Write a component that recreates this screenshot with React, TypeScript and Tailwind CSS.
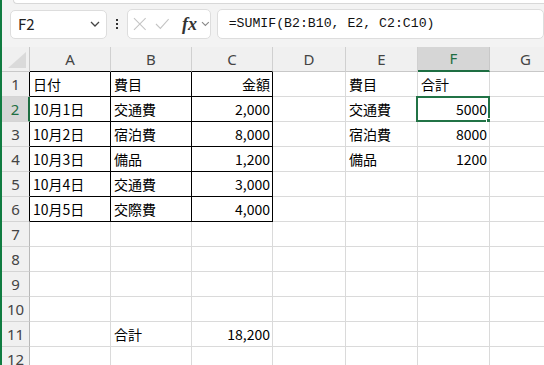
const COLS = ["A", "B", "C", "D", "E", "F", "G"];

type Cell = { text: string; right?: boolean };
const DATA: Record<number, Record<string, Cell>> = {
  1: { A: { text: "日付" }, B: { text: "費目" }, C: { text: "金額", right: true }, E: { text: "費目" }, F: { text: "合計" } },
  2: { A: { text: "10月1日" }, B: { text: "交通費" }, C: { text: "2,000", right: true }, E: { text: "交通費" }, F: { text: "5000", right: true } },
  3: { A: { text: "10月2日" }, B: { text: "宿泊費" }, C: { text: "8,000", right: true }, E: { text: "宿泊費" }, F: { text: "8000", right: true } },
  4: { A: { text: "10月3日" }, B: { text: "備品" }, C: { text: "1,200", right: true }, E: { text: "備品" }, F: { text: "1200", right: true } },
  5: { A: { text: "10月4日" }, B: { text: "交通費" }, C: { text: "3,000", right: true } },
  6: { A: { text: "10月5日" }, B: { text: "交際費" }, C: { text: "4,000", right: true } },
  11: { B: { text: "合計" }, C: { text: "18,200", right: true } },
};

const ROWS = [1, 2, 3, 4, 5, 6, 7, 8, 9, 10, 11, 12];
const inTable = (r: number, c: string) => r <= 6 && (c === "A" || c === "B" || c === "C");

function Toolbar() {
  return (
    <div className="h-[47px] bg-[#f3f3f3]">
      <div className="ml-[11px] h-[4px] rounded-bl-[6px] border-b border-l border-[#d8d8d8] bg-white" />
      <div className="mt-[5px] flex items-center">
        <div className="ml-[8px] flex h-[29px] w-[100px] items-center justify-between rounded-[5px] border border-[#dddddd] bg-white pr-[6px] pl-[7px]">
          <span className="text-[15px] text-[#222]">F2</span>
          <svg width="10" height="6" viewBox="0 0 10 6" fill="none" stroke="#444" strokeWidth="1.3">
            <path d="M1 1l4 4 4-4" />
          </svg>
        </div>
        <div className="mx-[9px] flex flex-col gap-[2px]">
          <span className="block h-[2px] w-[2px] bg-[#333]" />
          <span className="block h-[2px] w-[2px] bg-[#333]" />
          <span className="block h-[2px] w-[2px] bg-[#333]" />
        </div>
        <div className="flex h-[30px] w-[84px] items-center rounded-[5px] border border-[#dddddd] bg-white pl-[5px]">
          <svg width="14" height="14" viewBox="0 0 14 14" fill="none" stroke="#c4c4c4" strokeWidth="1.1">
            <path d="M1 1l12 12M13 1L1 13" />
          </svg>
          <svg className="ml-[9px]" width="15" height="12" viewBox="0 0 15 12" fill="none" stroke="#c4c4c4" strokeWidth="1.1">
            <path d="M1 6l4.5 4.5L14 1" />
          </svg>
          <span className="ml-[12px] font-['Liberation_Serif'] text-[18px] leading-none font-semibold text-[#333] italic">fx</span>
          <svg className="ml-[4px]" width="9" height="6" viewBox="0 0 9 6" fill="none" stroke="#888" strokeWidth="1.1">
            <path d="M1 1l3.5 3.5L8 1" />
          </svg>
        </div>
        <div className="ml-[6px] flex h-[30px] w-[340px] items-center rounded-[5px] border border-[#dddddd] bg-white pl-[11px]">
          <span className="font-['Liberation_Mono'] text-[13.2px] text-[#111]">=SUMIF(B2:B10, E2, C2:C10)</span>
        </div>
      </div>
    </div>
  );
}

function HeaderRow() {
  return (
    <>
      <div className="relative h-[25px] border-r border-b border-[#c8c8c8] bg-[#f0f0f0]">
        <svg className="absolute right-[3px] bottom-[3px]" width="18" height="16" viewBox="0 0 18 16">
          <path d="M18 0V16H0Z" fill="#dadada" />
        </svg>
      </div>
      {COLS.map((c) => {
        const sel = c === "F";
        const tbl = c === "A" || c === "B" || c === "C";
        return (
          <div
            key={c}
            className={
              "flex h-[25px] items-center justify-center font-['Noto_Sans'] text-[15px] " +
              (sel
                ? "border-r border-b-2 border-r-[#c8c8c8] border-b-[#1e6e42] bg-[#d6d6d6] text-[#1e6e42]"
                : tbl
                  ? "border-r border-b border-r-[#d0d0d0] border-b-black bg-[#f0f0f0] text-[#444]"
                  : "border-r border-b border-r-[#d0d0d0] border-b-[#c8c8c8] bg-[#f0f0f0] text-[#444]")
            }
          >
            {c}
          </div>
        );
      })}
    </>
  );
}

function RowHeader({ r }: { r: number }) {
  const cls =
    r === 2
      ? "border-r-2 border-r-[#1e6e42] bg-[#d6d6d6] text-[#1e6e42]"
      : r <= 6
        ? "border-r border-r-black bg-[#f0f0f0] text-[#444]"
        : "border-r border-r-[#b8b8b8] bg-[#f0f0f0] text-[#444]";
  return (
    <div className={"flex h-[25px] items-center justify-center border-b border-b-[#d4d4d4] font-['Noto_Sans'] text-[15px] " + cls}>
      {r}
    </div>
  );
}

function DataCell({ r, c }: { r: number; c: string }) {
  const cell = DATA[r]?.[c];
  const tbl = inTable(r, c);
  const border = tbl ? "border-r-black border-b-black" : "border-r-[#dadada] border-b-[#dadada]";
  return (
    <div
      className={
        "relative flex h-[25px] items-center overflow-visible border-r border-b bg-white px-[3px] text-[14px] text-black " +
        border +
        (cell?.right ? " justify-end pr-[2px]" : " justify-start")
      }
    >
      {cell && <span className="whitespace-nowrap">{cell.text}</span>}
      {r === 2 && c === "F" && (
        <div className="absolute top-[-1px] right-[-1px] bottom-[-1px] left-[-2px] border-2 border-[#217346]">
          <div className="absolute right-[-4px] bottom-[-4px] h-[6px] w-[6px] border border-white bg-[#217346]" />
        </div>
      )}
    </div>
  );
}

export default function App() {
  return (
    <div className="h-[365px] w-[544px] overflow-hidden border-l-2 border-[#107c41] bg-white font-['Noto_Sans_CJK_JP',sans-serif]">
      <Toolbar />
      <div className="grid w-[560px] grid-cols-[28px_81px_81px_81px_73px_72px_72px_72px]">
        <HeaderRow />
        {ROWS.map((r) => (
          <div key={r} className="contents">
            <RowHeader r={r} />
            {COLS.map((c) => (
              <DataCell key={c} r={r} c={c} />
            ))}
          </div>
        ))}
      </div>
    </div>
  );
}
